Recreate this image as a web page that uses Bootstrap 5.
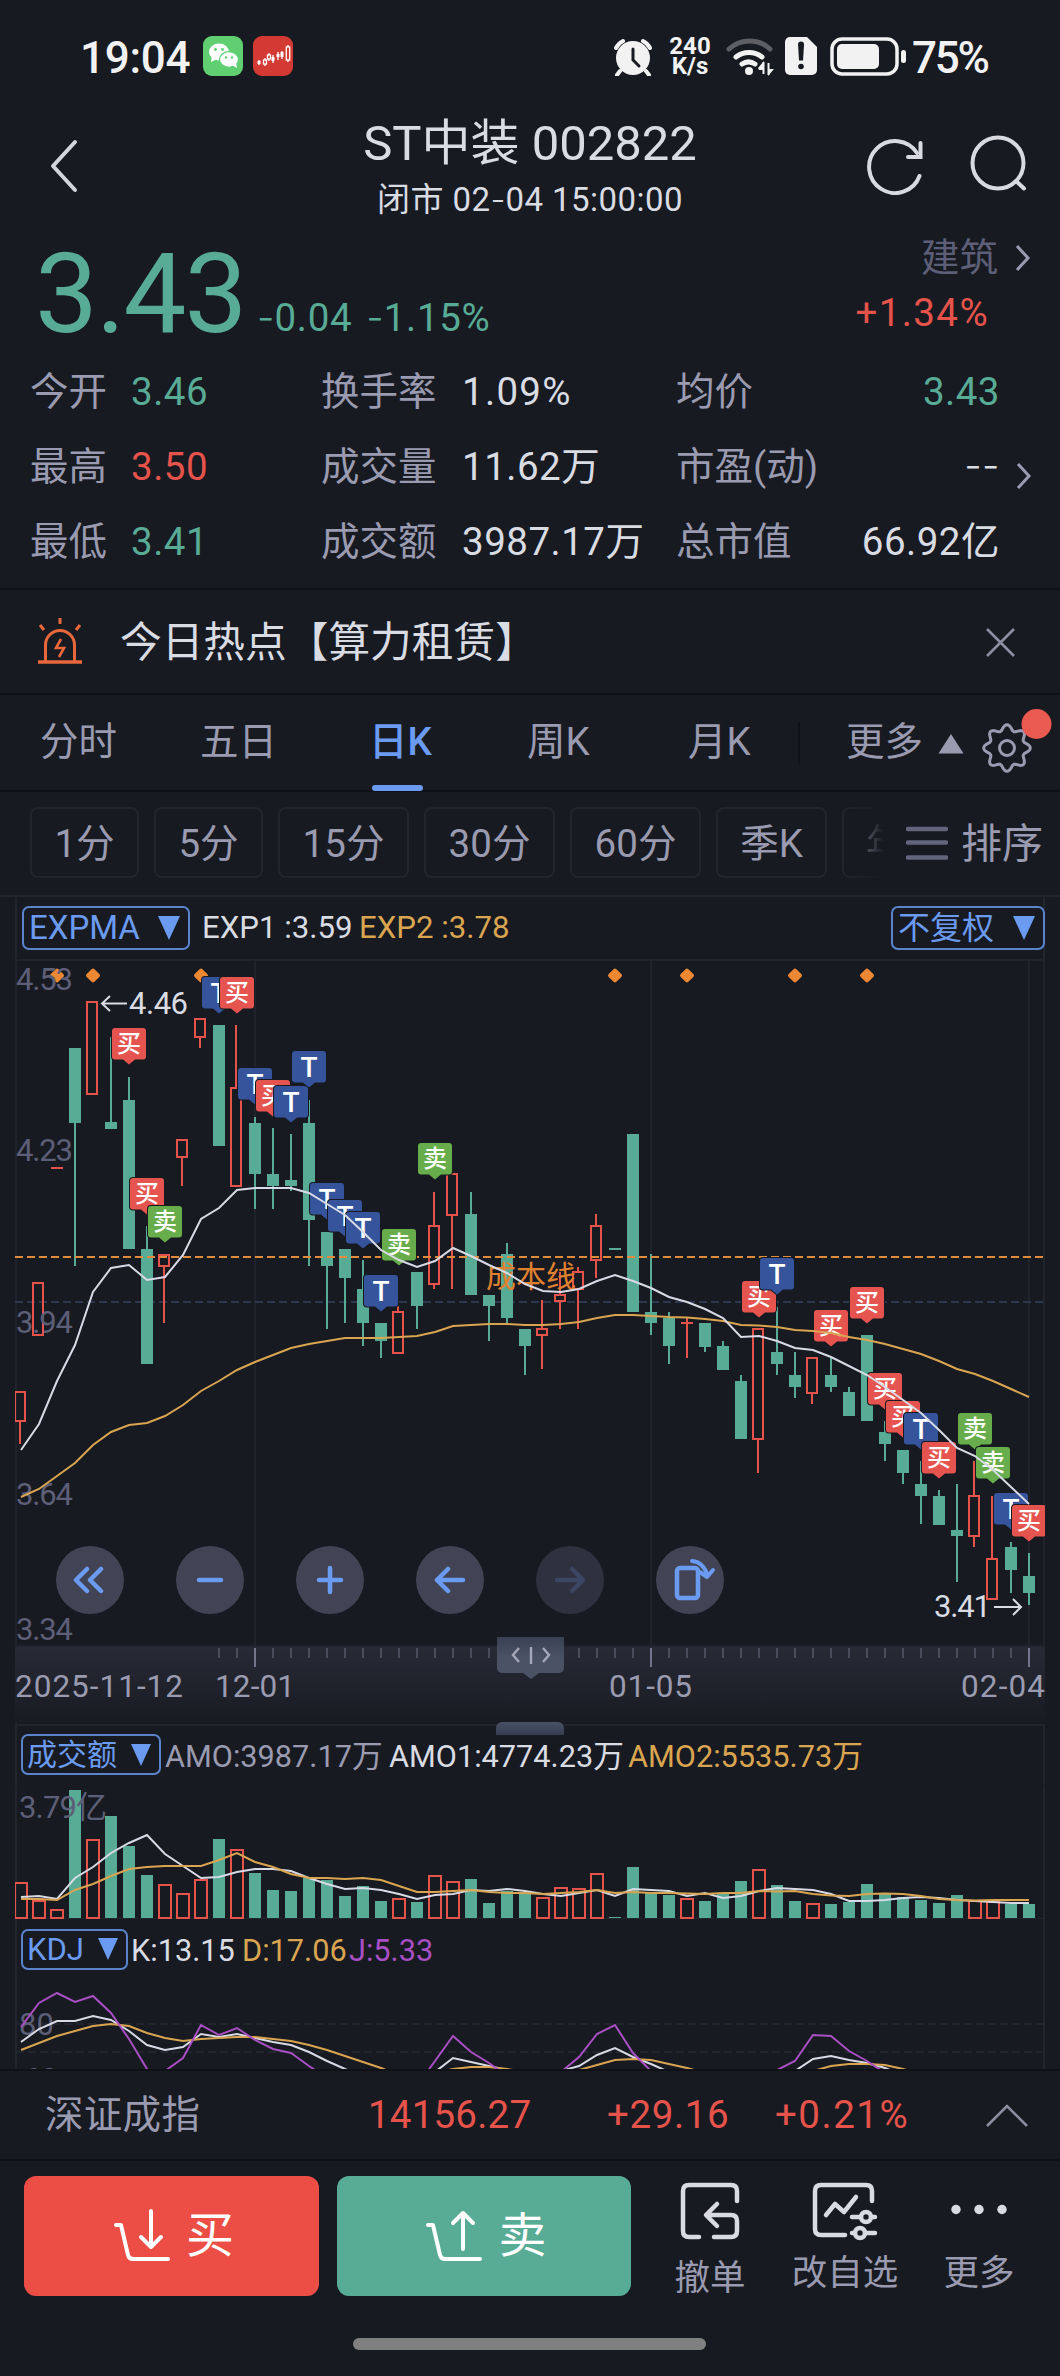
<!DOCTYPE html>
<html lang="zh-CN" data-bs-theme="dark">
<head>
<meta charset="utf-8">
<meta name="viewport" content="width=device-width, initial-scale=1">
<title>ST中装 002822</title>
<link href="https://cdn.jsdelivr.net/npm/bootstrap@5.3.0/dist/css/bootstrap.min.css" rel="stylesheet">
<style>
:root{--bg:#171a21;--line:#0f1116;--frame:#22252e;--lbl:#9a9bb0;--dim:#5c5f77;--txt:#dadce3;--grn:#58ab95;--red:#e5534b;--blue:#6b9bf0;--org:#daa550}
body{background:var(--bg);color:var(--txt);font-family:Roboto,"Noto Sans CJK SC",sans-serif;font-size:38.5px;line-height:1;width:1060px;margin:0;overflow-x:hidden}
svg{display:block;flex:none}
svg text{font-family:Roboto,"Noto Sans CJK SC",sans-serif}
.up{color:var(--red)}.down{color:var(--grn)}.lbl{color:var(--lbl)}.dim{color:var(--dim)}
.nw>*{white-space:nowrap;flex:none}
.hy{font-family:Inter,sans-serif;font-weight:300;letter-spacing:0;line-height:0}
.status{height:90px;padding:0 68px 14px 80px;color:#f2f2f2}
.clock{font-size:44px;font-weight:500;width:122px;letter-spacing:-.3px}
.speed{font-size:24px;font-weight:700;line-height:20px;width:46px;text-align:center}
.head{height:140px;padding:0 32px 0 47px}
.title1{font-size:49px;letter-spacing:0}
.title2{font-size:33px;margin-top:15px;letter-spacing:.45px}
.price{height:122px;padding:0 27px 0 35px}
.big{font-size:112px;letter-spacing:-2px;font-weight:400;width:222px}
.stats{height:236px;padding:3px 60px 8px 30px}
.stats .row{height:75px;--bs-gutter-x:0}
.stats .row span:not(.lbl){letter-spacing:.5px}
.c1{width:291px}.c2{width:355px}.c3{flex:1 1 0}
.c1 .lbl{width:101px}.c2 .lbl{width:141px}
.alertbar{height:107px;border-top:2px solid var(--line);border-bottom:2px solid var(--line);padding:2px 44px 0 36px}
.alertbar .msg{font-size:41.7px;margin-left:36px}
.tabs{height:97px;border-bottom:2px solid var(--line);padding-left:40px;color:var(--lbl)}
.tabs>span{height:97px;display:flex;align-items:center}
.tabs .on{color:var(--blue);position:relative;font-weight:500}
.tabs .on::after{content:"";position:absolute;left:3px;bottom:0;width:51px;height:6px;border-radius:3px;background:var(--blue)}
.chips{height:105px;padding:0 15px 2px 30px;color:var(--lbl);border-bottom:2px solid var(--frame)}
.chip{border:2px solid var(--frame);border-radius:8px;height:71px;width:109px;margin-right:15px;padding-top:3px;display:flex;align-items:center;justify-content:center}
.chip.w{width:131px}
.chip.cut{border-right:0;border-radius:8px 0 0 8px;width:44px;margin-right:20px;justify-content:flex-start;padding-left:22px;overflow:hidden;-webkit-mask-image:linear-gradient(90deg,#000 0,transparent 96%);mask-image:linear-gradient(90deg,#000 0,transparent 96%)}
.frame{margin:0 15px;border-left:2px solid var(--frame);border-right:2px solid var(--frame)}
.pick{border:2px solid #5a84cc;border-radius:7px;color:var(--blue);display:flex;align-items:center;justify-content:space-between}
.tri{width:0;height:0;border:11.5px solid transparent;border-top:24px solid var(--blue);border-bottom:0}
.exp{height:61px;padding:0 0 0 5px;font-size:31.2px}
.sub{font-size:30.7px}
.sub>span:not(.pick){padding-top:5px}
.index{height:92px;border-top:2px solid var(--line);border-bottom:2px solid var(--line);padding:0 31px 0 45px}
.trade{height:120px;border-radius:12px;color:#fff;font-size:48px;border:0;padding:0 0 0 4px}
.foot{height:215px;padding:15px 0 0 24px}
.tool{color:var(--lbl);font-size:35.5px}
.home{width:353px;height:12px;border-radius:6px;background:#808080}
</style>
<script src="https://cdn.jsdelivr.net/npm/bootstrap@5.3.0/dist/js/bootstrap.bundle.min.js"></script>
</head>
<body>

<header class="status d-flex align-items-end nw">
  <span class="clock" style="line-height:36px">19:04</span>
  <svg style="margin-left:1px" width="41" height="40" viewBox="0 0 41 40"><rect width="40" height="40" rx="9" fill="#5fcf72"/><ellipse cx="16" cy="16" rx="10" ry="8.5" fill="#fff"/><path d="M9 20l-1 6 6-3z" fill="#fff"/><ellipse cx="26" cy="23.500" rx="9.500" ry="7.800" fill="#fff" stroke="#5fcf72" stroke-width="1.200"/><path d="M29 29l5 3-1-6z" fill="#fff"/><g fill="#5fcf72"><circle cx="12.500" cy="13.500" r="1.400"/><circle cx="19.500" cy="13.500" r="1.400"/><circle cx="23" cy="21.500" r="1.200"/><circle cx="29" cy="21.500" r="1.200"/></g></svg>
  <svg style="margin-left:9px" width="41" height="40" viewBox="0 0 41 40"><rect width="40" height="40" rx="9" fill="#d33a33"/><g stroke="#fff" stroke-width="1.300" fill="none"><path d="M6 24v5M12 22v8M16 17v8M20 19v8M25 16v8M29 15v8M35 9v17"/><rect x="10.500" y="24" width="3" height="4" fill="#d33a33"/><rect x="14.500" y="19" width="3" height="4" fill="#d33a33"/><rect x="33.300" y="11" width="3.400" height="13" fill="#d33a33"/></g><g fill="#fff"><rect x="4.500" y="25" width="3" height="3"/><rect x="18.500" y="21" width="3" height="4"/><rect x="23.500" y="18" width="3" height="3"/><rect x="27.500" y="16" width="3" height="5"/></g></svg>
  <svg class="ms-auto" width="38" height="38" viewBox="0 0 38 38"><circle cx="19" cy="20" r="17" fill="#f2f2f2"/><path d="M2 10A16 16 0 0 1 9 3M36 10A16 16 0 0 0 29 3M6 33l-3 4M32 33l3 4" stroke="#f2f2f2" stroke-width="4" stroke-linecap="round" fill="none"/><path d="M19 11v11l6 6" stroke="#171a21" stroke-width="3" fill="none" stroke-linecap="round"/></svg>
  <span class="speed" style="margin-left:15px"><span class="d-block">240</span><span class="d-block">K/s</span></span>
  <svg style="margin-left:12px" width="50" height="40" viewBox="0 0 50 40" fill="none"><path d="M4 13a30 30 0 0 1 41 0" stroke="#5d5f64" stroke-width="5" stroke-linecap="round"/><path d="M11 21a21 21 0 0 1 26 0" stroke="#f2f2f2" stroke-width="5" stroke-linecap="round"/><path d="M17 28a12 12 0 0 1 13 0" stroke="#f2f2f2" stroke-width="5" stroke-linecap="round"/><circle cx="24" cy="35" r="4" fill="#f2f2f2"/><path d="M34 34h5v-9l-6 7M39 25v14M43 26v14l6-7h-5" fill="#f2f2f2"/><path d="M38.500 26v12M43.500 27v12" stroke="#f2f2f2" stroke-width="2"/></svg>
  <svg style="margin-left:9px" width="33" height="40" viewBox="0 0 33 40"><path d="M6 1h17l10 10v23a5 5 0 0 1-5 5H6a5 5 0 0 1-5-5V6a5 5 0 0 1 5-5z" fill="#f2f2f2"/><path d="M14 8.500a3 3 0 0 1 6 0l-1 16h-4z" fill="#171a21"/><circle cx="17" cy="30.500" r="2.800" fill="#171a21"/></svg>
  <svg style="margin-left:13px" width="78" height="40" viewBox="0 0 78 40"><rect x="2" y="3" width="65" height="35" rx="10" fill="none" stroke="#f2f2f2" stroke-width="3.500"/><rect x="7" y="8" width="42" height="25" rx="5" fill="#f2f2f2"/><rect x="71" y="14" width="5" height="13" rx="2.500" fill="#f2f2f2"/></svg>
  <span class="clock" style="line-height:36px;width:80px;margin-left:4px;letter-spacing:-2.2px">75%</span>
</header>

<nav class="head d-flex align-items-start justify-content-between nw">
  <svg style="margin-top:48px" width="120" height="56" viewBox="0 0 120 56"><path d="M28 4L6 28l22 24" fill="none" stroke="#d4d5dc" stroke-width="4" stroke-linejoin="round" stroke-linecap="round"/></svg>
  <div class="text-center" style="margin-top:29px;margin-left:28px"><div class="title1">ST中装 002822</div><div class="title2">闭市 02<span class="hy">-</span>04 15:00:00</div></div>
  <div class="d-flex" style="gap:43px;margin-top:45px">
    <svg width="60" height="60" viewBox="0 0 60 60" fill="none" stroke="#d9dae0" stroke-width="4" stroke-linecap="round"><path d="M54.500 41A26 26 0 1 1 52 18"/><path d="M55.500 8v14H43"/></svg>
    <svg width="60" height="60" viewBox="0 0 60 60" fill="none" stroke="#d9dae0" stroke-width="4" stroke-linecap="round"><circle cx="30" cy="28" r="25.500"/><path d="M48 46l8 7.500"/></svg>
  </div>
</nav>

<section class="price d-flex nw">
  <span class="big down" style="margin-top:8px">3.43</span>
  <span class="down d-flex" style="margin-top:69px;gap:14px;font-size:38.5px;letter-spacing:.7px"><span><span class="hy">-</span>0.04</span><span><span class="hy">-</span>1.15%</span></span>
  <div class="ms-auto text-end"><div class="d-flex align-items-center" style="height:56px"><span class="dim" style="margin-left:76px">建筑</span>
    <svg style="margin-left:15px" width="20" height="30" viewBox="0 0 20 30"><path d="M4 3l11 12L4 27" fill="none" stroke="#9a9bb0" stroke-width="3"/></svg></div>
    <div class="up" style="margin:8px 44px 0 0;letter-spacing:1.4px">+1.34%</div></div>
</section>

<section class="stats position-relative">
  <div class="row align-items-center flex-nowrap"><div class="c1 d-flex"><span class="lbl">今开</span><span class="down">3.46</span></div><div class="c2 d-flex"><span class="lbl">换手率</span><span style="letter-spacing:1.3px">1.09%</span></div><div class="c3 d-flex justify-content-between"><span class="lbl">均价</span><span class="down">3.43</span></div></div>
  <div class="row align-items-center flex-nowrap"><div class="c1 d-flex"><span class="lbl">最高</span><span class="up">3.50</span></div><div class="c2 d-flex"><span class="lbl">成交量</span><span>11.62万</span></div><div class="c3 d-flex justify-content-between"><span class="lbl">市盈(动)</span><span style="line-height:36px"><span class="hy">--</span></span></div></div>
  <div class="row align-items-center flex-nowrap"><div class="c1 d-flex"><span class="lbl">最低</span><span class="down">3.41</span></div><div class="c2 d-flex"><span class="lbl">成交额</span><span>3987.17万</span></div><div class="c3 d-flex justify-content-between"><span class="lbl">总市值</span><span>66.92亿</span></div></div>
  <svg class="position-absolute" style="right:25px;top:109px" width="20" height="30" viewBox="0 0 20 30"><path d="M3 3l11 12L3 27" fill="none" stroke="#9a9bb0" stroke-width="3"/></svg>
</section>

<section class="alertbar d-flex align-items-center nw">
  <svg style="margin-top:-4px" width="48" height="50" viewBox="0 0 48 50" fill="none" stroke="#e8673b" stroke-width="3"><path d="M9.500 45V29a14.500 14.500 0 0 1 29 0v16"/><path d="M2 46h44" stroke-width="3.500"/><path d="M24 2v6M4 9l4 5M44 9l-4 5"/><path d="M25 23l-5 9h8l-5 9" stroke-width="2.600"/></svg>
  <span class="msg">今日热点【算力租赁】</span>
  <svg class="ms-auto" width="31" height="31" viewBox="0 0 31 31"><path d="M2 2l27 27M29 2L2 29" stroke="#8d8ea0" stroke-width="2.600"/></svg>
</section>

<nav class="tabs d-flex align-items-center nw">
  <span style="width:160px">分时</span><span style="width:169px">五日</span><span class="on" style="width:158px">日K</span><span style="width:161px">周K</span><span style="width:110px">月K</span>
  <i style="width:2px;height:42px;background:#101218;margin-right:46px"></i>
  <span>更多</span>
  <svg style="margin:3px 0 0 15px" width="26" height="20" viewBox="0 0 26 20"><path d="M13 0l12.500 19.500H.5z" fill="#9a9bb0"/></svg>
  <svg style="margin-left:17px" width="78" height="74" viewBox="0 0 78 74"><g fill="none" stroke="#9a9bb0" stroke-width="3" stroke-linejoin="round"><path id="gear"/><circle cx="26" cy="42" r="7.500"/></g><circle cx="55.500" cy="18" r="15" fill="#ea5a50"/></svg>
</nav>

<div class="chips d-flex align-items-center nw">
  <span class="chip">1分</span><span class="chip">5分</span><span class="chip w">15分</span><span class="chip w">30分</span><span class="chip w">60分</span><span class="chip" style="width:111px">季K</span><span class="chip cut">年K</span>
  <svg width="42" height="38" viewBox="0 0 42 38"><path d="M2 5h38M2 18.500h38M2 33.500h38" stroke="#62657c" stroke-width="4.500" stroke-linecap="round"/></svg>
  <span style="font-size:41px;margin-left:13px;padding-top:3px">排序</span>
</div>

<div class="frame exp d-flex align-items-center nw">
  <span class="pick" style="width:168px;height:44px;padding:0 8px 0 5px;font-size:33px">EXPMA<i class="tri"></i></span>
  <span style="margin-left:12px;width:157px">EXP1 :3.59</span><span style="color:var(--org)">EXP2 :3.78</span>
  <span class="pick ms-auto" style="width:154px;height:44px;padding:0 8px 0 5px;font-size:32px;margin-right:-2px">不复权<i class="tri"></i></span>
</div>

<svg id="kline" width="1060" height="766" viewBox="0 958 1060 766">
  <defs>
    <linearGradient id="gStrip" x1="0" y1="0" x2="0" y2="1"><stop offset="0" stop-color="#282b36"/><stop offset="1" stop-color="#181b22"/></linearGradient>
    <linearGradient id="gTab" x1="0" y1="0" x2="0" y2="1"><stop offset="0" stop-color="#3a4054"/><stop offset=".5" stop-color="#4c5266"/><stop offset="1" stop-color="#4c5266"/></linearGradient>
    <clipPath id="clipK"><rect x="15" y="958" width="1030" height="766"/></clipPath>
  </defs>
  <path d="M15 960H1045M16 958V1724M1044 958V1647M255 960V1647M651 960V1647M1029 960V1647" stroke="#20232c" stroke-width="2"/>
  <path d="M15 1302H1044" stroke="#2d3850" stroke-width="2" stroke-dasharray="8 4"/>
  <g id="candles" clip-path="url(#clipK)"></g>
  <path d="M15 1257H1044" stroke="#e08c3c" stroke-width="2" stroke-dasharray="8 4"/>
  <text x="486" y="1287" font-size="30" fill="#e0812f">成本线</text>
  <g id="tags" clip-path="url(#clipK)"></g>
  <g fill="#5c5f77" font-size="31">
    <text x="16" y="990" textLength="57">4.53</text><text x="16" y="1161" textLength="57">4.23</text><text x="16" y="1333" textLength="57">3.94</text><text x="16" y="1505" textLength="57">3.64</text><text x="16" y="1640" textLength="57">3.34</text>
  </g>
  <g id="emas" fill="none" stroke-width="2"></g>
  <g fill="#dadce3" font-size="31"><text x="129" y="1014" textLength="59">4.46</text><text x="934" y="1617" textLength="57">3.41</text></g>
  <path d="M127 1003.500H102M110 996l-8 7.500 8 7.500M994 1607H1021M1013 1599l8 8-8 8" fill="none" stroke="#dadce3" stroke-width="2"/>
  <rect x="15" y="1646" width="1030" height="76" fill="url(#gStrip)"/>
  <path d="M15 1646H1045" stroke="#20232c" stroke-width="2"/>
  <path id="ticks" stroke="#4a4d5c" stroke-width="2"/>
  <path d="M255 1648V1667M651 1648V1667M1029 1648V1667" stroke="#73768a" stroke-width="2"/>
  <g fill="#9a9bb0" font-size="31.500"><text x="15" y="1697" textLength="168">2025-11-12</text><text x="215" y="1697" textLength="80">12-01</text><text x="609" y="1697" textLength="83">01-05</text><text x="961" y="1697" textLength="84">02-04</text></g>
  <path d="M497 1637h67v31a5 5 0 0 1-5 5h-20l-8 6-8-6h-21a5 5 0 0 1-5-5z" fill="url(#gTab)"/>
  <path d="M519 1648l-6 7 6 7M531 1647v17M543 1648l6 7-6 7" fill="none" stroke="#a4a7b8" stroke-width="2.400"/>
  <g id="pads" fill="none" stroke="#6b9bf0" stroke-width="4.500" stroke-linecap="round" stroke-linejoin="round">
    <g fill="#424455" stroke="none"><circle cx="90" cy="1580" r="34"/><circle cx="210" cy="1580" r="34"/><circle cx="330" cy="1580" r="34"/><circle cx="450" cy="1580" r="34"/><circle cx="570" cy="1580" r="34" fill="#2f313f"/><circle cx="690" cy="1580" r="34"/></g>
    <path d="M87 1569l-11 11 11 11M101 1569l-11 11 11 11M199 1580h22M319 1580h22M330 1568v24M463 1580h-26M448 1569l-11 11 11 11"/>
    <path d="M557 1580h26M572 1569l11 11-11 11" stroke="#3a4663"/>
    <rect x="677" y="1568" width="21" height="30" rx="3"/><path d="M692 1561q11 1 15 13M700 1572l7 5 6-7" stroke-width="4"/>
  </g>
</svg>

<div class="frame sub d-flex align-items-center nw position-relative" style="height:61px;padding:0 0 2px 4px;border-top:2px solid var(--frame)">
  <i class="position-absolute" style="left:479px;top:-4px;width:68px;height:13px;background:linear-gradient(#4c5266,#363c50);border-radius:6px 6px 0 0"></i>
  <span class="pick" style="width:140px;height:41px;padding:0 8px 0 4px;font-size:30px">成交额<i class="tri" style="border-width:22px 10.5px 0"></i></span>
  <span class="lbl" style="margin-left:4px;width:224px">AMO:3987.17万</span><span style="width:239px">AMO1:4774.23万</span><span style="color:var(--org)">AMO2:5535.73万</span>
</div>
<svg id="amo" width="1060" height="134" viewBox="0 1785 1060 134">
  <path d="M16 1786V1919M1044 1786V1919M15 1919H1045" stroke="#22252e" stroke-width="2"/>
  <g id="bars" clip-path="url(#clipA)"></g><clipPath id="clipA"><rect x="15" y="1785" width="1030" height="134"/></clipPath>
  <text x="19" y="1818" font-size="31" fill="#5c5f77" textLength="88">3.79亿</text>
  <g id="amas" fill="none" stroke-width="2"></g>
</svg>
<div class="frame sub d-flex align-items-center nw" style="height:67px;padding:0 0 7px 4px">
  <span class="pick" style="width:107px;height:41px;padding:0 8px 0 4px;font-size:31px">KDJ<i class="tri" style="border-width:22px 10.5px 0"></i></span>
  <span style="margin-left:3px;width:111px">K:13.15</span><span style="color:var(--org);width:107px">D:17.06</span><span style="color:#a94fc4">J:5.33</span>
</div>
<svg id="kdj" width="1060" height="83" viewBox="0 1986 1060 83">
  <path d="M16 1986V2069M1044 1986V2069" stroke="#22252e" stroke-width="2"/>
  <path d="M16 2024H1044M16 2052H1044" stroke="#22252e" stroke-width="2" stroke-dasharray="8 4"/>
  <text x="19" y="2035" font-size="31" fill="#5c5f77">80</text><text x="23" y="2090" font-size="31" fill="#5c5f77">60</text>
  <g id="kdjl" fill="none" stroke-width="2"></g>
</svg>

<section class="index d-flex align-items-center nw">
  <span class="lbl" style="width:323px;letter-spacing:.3px">深证成指</span><span class="up" style="width:239px;letter-spacing:.2px">14156.27</span><span class="up" style="width:168px;letter-spacing:.6px">+29.16</span><span class="up" style="letter-spacing:1.5px">+0.21%</span>
  <svg class="ms-auto" width="44" height="26" viewBox="0 0 44 26"><path d="M2 24L22 4l20 20" fill="none" stroke="#8d8ea0" stroke-width="2.600"/></svg>
</section>

<footer class="foot position-relative">
  <div class="d-flex align-items-start nw">
    <button class="trade btn d-flex align-items-center justify-content-center" style="width:295px;background:#ec4d44;margin-right:18px">
      <svg style="margin-right:13px" width="60" height="54" viewBox="0 0 60 54" fill="none" stroke="#fff" stroke-width="4" stroke-linecap="round" stroke-linejoin="round"><path d="M3 16h5l7 30q1 4 5 4h35"/><path d="M38 2v36M28 28l10 10 10-10"/></svg>买</button>
    <button class="trade btn d-flex align-items-center justify-content-center" style="width:294px;background:#58ab95">
      <svg style="margin-right:13px" width="60" height="54" viewBox="0 0 60 54" fill="none" stroke="#fff" stroke-width="4" stroke-linecap="round" stroke-linejoin="round"><path d="M3 16h5l7 30q1 4 5 4h35"/><path d="M38 40V4M28 14L38 4l10 10"/></svg>卖</button>
    <div class="tool text-center" style="width:100px;margin:6px 0 0 29px">
      <svg class="mx-auto" width="60" height="59" viewBox="0 0 60 59" fill="none" stroke="#dadbe1" stroke-width="4.500" stroke-linecap="round" stroke-linejoin="round"><path d="M57 19V9q0-6-6-6H9Q3 3 3 9v40q0 6 6 6h10M34 55h17q6 0 6-6V39q0-6-6-6H27M37 22L26 33l11 11"/></svg>
      <div style="margin-top:20px">撤单</div></div>
    <div class="tool text-center" style="width:130px;margin:6px 0 0 20px">
      <svg class="mx-auto" width="66" height="59" viewBox="0 0 66 59" fill="none" stroke="#dadbe1" stroke-width="4.500" stroke-linecap="round" stroke-linejoin="round"><path d="M60 19V9q0-6-6-6H9Q3 3 3 9v38q0 6 6 6h24M14 33l9-11 9 8 12-15M40 35h9M59 35h4M40 51h3M53 51h10"/><circle cx="54" cy="35" r="5"/><circle cx="48" cy="51" r="5"/></svg>
      <div style="margin-top:15px">改自选</div></div>
    <div class="tool text-center" style="width:100px;margin:6px 0 0 19px">
      <svg class="mx-auto" width="66" height="59" viewBox="0 0 66 59" fill="#dadbe1"><circle cx="10" cy="27.500" r="4.700"/><circle cx="33" cy="27.500" r="4.700"/><circle cx="56" cy="27.500" r="4.700"/></svg>
      <div style="margin-top:15px">更多</div></div>
  </div>
  <div class="home" style="margin:41px 0 0 329px"></div>
</footer>

<script>
const G='#58ab95',R='#e5534b',W='#d8dae6',O='#daa550',P='#a94fc4';
const cx=i=>21+18*i;
/* index, direction, high, body top, body bottom, low (chart units) */
const C=`0r1391,1391,1422,1444 1r1282,1282,1336,1336 2d1168 3g1048,1048,1123,1266 4r1001,1001,1095,1095 5g1037,1122,1129,1129 6g1077,1100,1249,1249 7g1226,1249,1364,1364 8r1254,1254,1267,1323 9r1139,1139,1158,1186 10r1018,1018,1038,1048 11g1025,1025,1146,1146 12r1025,1087,1187,1187 13g1117,1123,1174,1209 14g1128,1174,1186,1209 15g1134,1180,1186,1191 16g1100,1123,1220,1266 17g1232,1232,1266,1329 18g1249,1249,1278,1323 19g1260,1289,1323,1346 20g1323,1323,1341,1358 21r1306,1311,1354,1354 22g1272,1272,1306,1329 23r1192,1225,1285,1289 24r1173,1173,1216,1289 25g1192,1214,1295,1295 26g1295,1295,1306,1341 27g1243,1254,1318,1323 28g1329,1329,1346,1375 29r1300,1328,1336,1369 30r1272,1294,1302,1329 31r1267,1271,1290,1329 32r1214,1225,1261,1278 33e1249 34g1134,1134,1312,1312 35g1254,1312,1323,1335 36g1312,1318,1346,1364 37t1318,1323,1323,1358 38g1323,1323,1347,1352 39g1341,1346,1370,1370 40g1375,1381,1439,1439 41r1328,1328,1440,1473 42g1307,1352,1364,1375 43g1352,1375,1387,1398 44r1357,1357,1394,1404 45g1358,1375,1387,1392 46g1387,1392,1416,1416 47g1335,1335,1421,1421 48g1421,1432,1444,1461 49g1450,1450,1473,1484 50g1461,1484,1496,1524 51g1490,1496,1525,1525 52g1484,1530,1536,1582 53r1461,1495,1537,1547 54r1496,1558,1600,1600 55g1542,1547,1570,1593 56g1553,1576,1593,1605`;
let s='';
C.split(' ').forEach(t=>{const [,n,k,rest]=t.match(/^(\d+)([a-z])(.*)$/);const v=rest.split(',').map(Number),x=cx(+n);
 if(k=='d'||k=='e'){s+=`<rect x="${x-6}" y="${v[0]-1}" width="12" height="2" fill="${k=='d'?R:G}"/>`;return}
 if(k=='g')s+=`<path d="M${x} ${v[0]}V${v[3]}" stroke="${G}" stroke-width="2"/><rect x="${x-6}" y="${v[1]}" width="12" height="${v[2]-v[1]}" fill="${G}"/>`;
 else if(k=='t')s+=`<path d="M${x} ${v[0]}V${v[3]}M${x-6} ${v[1]}H${x+6}" stroke="${R}" stroke-width="2"/>`;
 else s+=`<path d="M${x-1} ${v[0]}V${v[1]}M${x-1} ${v[2]}V${v[3]}" stroke="${R}" stroke-width="2"/><rect x="${x-6}" y="${v[1]+1}" width="10" height="${v[2]-v[1]-2}" fill="none" stroke="${R}" stroke-width="2"/>`;
});
document.getElementById('candles').innerHTML=s;

const line=(a,c)=>`<polyline stroke="${c}" points="${a.map((y,i)=>cx(i)+','+y).join(' ')}"/>`;
document.getElementById('emas').innerHTML=
 line([1497,1489,1476,1463,1445,1432,1425,1423,1416,1405,1391,1381,1370,1362,1355,1348,1344,1341,1338,1338,1338,1337,1336,1332,1326,1325,1324,1324,1325,1325,1324,1322,1318,1315,1315,1316,1317,1317.5,1319,1321,1325,1325.5,1327,1330,1331,1333,1337,1340,1344,1349,1354,1361,1369,1374,1381,1389,1397],O)+
 line([1450,1424,1381,1345,1292,1268,1265,1280,1277,1255,1219,1208,1190,1188,1188,1188,1193,1204,1215,1232,1250,1260,1267,1261,1248,1256,1265,1273,1284,1291,1292,1289,1281,1275,1281,1288,1297,1302,1309,1318,1337,1336,1341,1348,1350,1357,1366,1375,1387,1400,1413,1430,1448,1456,1470,1487,1504],W);

/* trade markers: centre x, top y, kind; later ones lie on top */
const fills={T:'#35549b','买':'#e5544f','卖':'#67ad4b'};
s='';
[57,93,201,615,687,795,867].forEach(x=>s+=`<rect x="${x-5.5}" y="970" width="11" height="11" rx="2" fill="#ec8833" transform="rotate(45 ${x} 975.5)"/>`);
[[219,977,'T'],[237,977,'买'],[255,1068,'T'],[273,1080,'买'],[291,1086,'T'],[309,1051,'T'],[327,1183,'T'],[345,1200,'T'],[363,1212,'T'],[129,1178,'买',18],[165,1206,'卖'],[129,1028,'买'],[381,1275,'T'],[399,1229,'卖'],[435,1143,'卖'],[759,1281,'买'],[777,1258,'T'],[831,1310,'买'],[867,1287,'买'],[885,1373,'买'],[903,1401,'买'],[921,1413,'T'],[939,1442,'买'],[975,1413,'卖'],[993,1447,'卖'],[1011,1493,'T'],[1029,1505,'买']]
.forEach(([x0,y,k,dx])=>{const x=x0+(dx||0),l=x-17;
 s+=`<path d="M${l+3} ${y}h28a3 3 0 0 1 3 3v25.500a3 3 0 0 1-3 3h-8l-6 5-6-5h-8a3 3 0 0 1-3-3v-25.500a3 3 0 0 1 3-3z" fill="${fills[k]}" stroke="#171a21" stroke-width="2" paint-order="stroke"/>`+
 `<text x="${x}" y="${k=='T'?y+25.5:y+24}" text-anchor="middle" font-size="${k=='T'?28:24}" font-weight="500" fill="#fff">${k}</text>`});
document.getElementById('tags').innerHTML=s;

let d='';for(let x=219;x<1040;x+=18)d+=`M${x} 1648V1658`;
document.getElementById('ticks').setAttribute('d',d);

/* turnover */
const V='r1883 r1901 r1910 g1790 r1840 g1816 g1846 g1875 r1885 r1894 r1880 g1839 r1850 g1873 g1890 g1891 g1878 g1880 g1896 g1886 g1901 r1899 g1902 r1876 r1882 g1879 g1903 g1891 g1894 r1898 r1888 r1889 r1874 g1917 g1867 g1893 g1895 r1899 g1901 g1893 g1881 r1870 g1885 g1901 r1904 g1904 g1902 g1884 g1894 g1897 g1900 g1903 g1895 r1901 r1902 g1904 g1904'.split(' ');
document.getElementById('bars').innerHTML=V.map((t,i)=>{const y=+t.slice(1),x=cx(i);return t[0]=='g'?`<rect x="${x-6}" y="${y}" width="12" height="${1918-y}" fill="${G}"/>`:`<rect x="${x-6}" y="${y}" width="12" height="${1918-y}" fill="none" stroke="${R}" stroke-width="2"/>`}).join('');
document.getElementById('amas').innerHTML=
 line([1897,1896,1899,1878,1867,1853,1843,1835,1854,1866,1878,1877,1872,1869,1869,1871,1878,1884,1889,1888,1890,1894,1899,1895,1894,1890,1891,1889,1891,1894,1896,1893,1890,1896,1889,1890,1891,1896,1893,1898,1896,1891,1888,1889,1890,1894,1901,1901,1900,1898,1897,1898,1900,1901,1902,1903,1903],W)+
 line([1899,1899,1900,1890,1884,1876,1869,1867,1866,1866,1866,1860,1853,1862,1867,1874,1878,1878,1879,1878,1880,1886,1892,1892,1891,1890,1892,1893,1893,1894,1893,1892,1890,1893,1892,1893,1893,1893.5,1894,1893,1893,1891,1891.5,1891,1894,1895.5,1896,1894,1893.5,1894,1896,1899,1900,1900.5,1900,1900,1900],O);

/* KDJ: values run out of the visible band between humps */
const seg=(list,c)=>list.map(([st,a])=>`<polyline stroke="${c}" points="${a.map((y,i)=>cx(st+i)+','+y).join(' ')}"/>`).join('');
document.getElementById('kdjl').innerHTML=
 seg([[0,[2042,2029,2021,2021,2016,2020,2031,2045,2050,2047,2034,2037,2034,2038,2042,2045,2052,2061,2069,2076]],[22,[2082,2072,2058,2062,2066,2070,2074]],[29,[2076,2071,2066,2055,2048,2057,2064,2072]],[42,[2082,2071,2059,2056,2060,2063,2068,2075]]],W)+
 seg([[0,[2050,2043,2036,2031,2026,2024,2026,2033,2038,2041,2039,2038,2037,2037,2039,2041,2045,2050,2056,2062,2068,2075]],[23,[2073,2069,2067,2067,2069,2072]],[30,[2074,2070,2065,2060,2059,2060,2064,2068,2073]],[43,[2076,2071,2066,2064,2064,2065,2069,2074]]],O)+
 seg([[0,[2027,2003,1993,2002,1996,2013,2039,2069,2100]],[7,[2085,2071,2058,2025,2035,2028,2040,2049,2053,2066,2078]],[22,[2086,2061,2036,2052,2063,2076]],[29,[2088,2072,2057,2034,2025,2053,2071,2088]],[41,[2079,2070,2061,2035,2036,2051,2061,2073]]],P);

/* settings gear outline */
let g='';for(let a=0;a<=360;a+=3){const r=20.5+2.8*Math.cos(a*8*Math.PI/180);const f=a*Math.PI/180;g+=(a?'L':'M')+(26+r*Math.sin(f)).toFixed(1)+' '+(42-r*Math.cos(f)).toFixed(1)}
document.getElementById('gear').setAttribute('d',g+'Z');
</script>
</body>
</html>
